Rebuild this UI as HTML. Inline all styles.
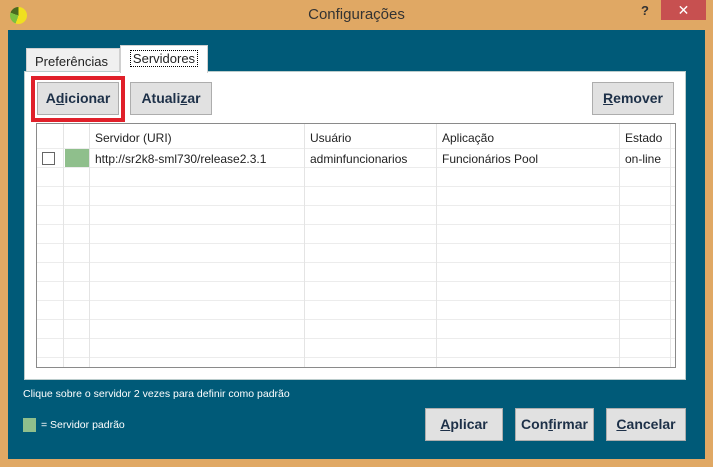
<!DOCTYPE html>
<html><head><meta charset="utf-8"><style>
*{margin:0;padding:0;box-sizing:border-box}
body{width:713px;height:467px;background:#e0a864;position:relative;overflow:hidden;font-family:"Liberation Sans",sans-serif;}
.a{position:absolute}
.btn{position:absolute;background:#e1e1e1;border:1px solid #adadad;font-weight:bold;font-size:14px;color:#1d3048;text-align:center;}
.hl{position:absolute;left:37px;width:638px;height:1px;background:#ececec}
.vl{position:absolute;top:124px;height:243px;width:1px;background:#e4e4e4}
.t{position:absolute;font-size:12px;color:#222}
</style></head><body>
<div class="a" style="left:10px;top:7px;width:17px;height:17px;border-radius:50%;background:conic-gradient(#f0e020 0 200deg,#7cc040 200deg 290deg,#4a6a20 290deg 360deg)"></div>
<div class="a" style="left:0;top:6px;width:713px;text-align:center;font-size:15px;color:#333">Configurações</div>
<div class="a" style="left:641px;top:3px;font-size:13px;font-weight:bold;color:#333">?</div>
<div class="a" style="left:661px;top:0;width:45px;height:20px;background:#c75050;color:#fff;text-align:center;font-size:14px;line-height:20px">✕</div>
<div class="a" style="left:8px;top:30px;width:697px;height:429px;background:#005a78"></div>
<div class="a" style="left:26px;top:48px;width:94px;height:24px;background:#f0f0f0;border:1px solid #d0d0d0;font-size:13px;color:#222;padding:5px 0 0 8px">Preferências</div>
<div class="a" style="left:24px;top:71px;width:662px;height:309px;background:#fff;border:1px solid #bcc;"></div>
<div class="a" style="left:120px;top:45px;width:88px;height:28px;background:#fff;border:1px solid #d0d0d0;border-bottom:none;font-size:13px;color:#222;padding:5px 0 0 0;text-align:center"><span style="border:1px dotted #000;padding:0 2px">Servidores</span></div>
<div class="a" style="left:31px;top:76px;width:94px;height:46px;border:4px solid #e0202a"></div>
<div class="btn" style="left:37px;top:82px;width:82px;height:33px;line-height:31px">A<u>d</u>icionar</div>
<div class="btn" style="left:130px;top:82px;width:82px;height:33px;line-height:31px">Atuali<u>z</u>ar</div>
<div class="btn" style="left:592px;top:82px;width:82px;height:33px;line-height:31px"><u>R</u>emover</div>
<div class="a" style="left:36px;top:123px;width:640px;height:245px;border:1px solid #8a8a8a;background:#fff"></div>
<div class="hl" style="top:148px"></div><div class="hl" style="top:167px"></div><div class="hl" style="top:186px"></div><div class="hl" style="top:205px"></div><div class="hl" style="top:224px"></div><div class="hl" style="top:243px"></div><div class="hl" style="top:262px"></div><div class="hl" style="top:281px"></div><div class="hl" style="top:300px"></div><div class="hl" style="top:319px"></div><div class="hl" style="top:338px"></div><div class="hl" style="top:357px"></div>
<div class="vl" style="left:63px"></div><div class="vl" style="left:89px"></div><div class="vl" style="left:304px"></div><div class="vl" style="left:436px"></div><div class="vl" style="left:619px"></div><div class="vl" style="left:670px"></div>
<div class="a" style="left:42px;top:152px;width:13px;height:13px;border:1px solid #666;background:#fff"></div>
<div class="a" style="left:65px;top:149px;width:24px;height:18px;background:#8fbf8c"></div>
<div class="t" style="left:95px;top:131px">Servidor (URI)</div>
<div class="t" style="left:310px;top:131px">Usuário</div>
<div class="t" style="left:442px;top:131px">Aplicação</div>
<div class="t" style="left:625px;top:131px">Estado</div>
<div class="t" style="left:95px;top:152px">http://sr2k8-sml730/release2.3.1</div>
<div class="t" style="left:310px;top:152px">adminfuncionarios</div>
<div class="t" style="left:442px;top:152px">Funcionários Pool</div>
<div class="t" style="left:625px;top:152px">on-line</div>
<div class="a" style="left:23px;top:388px;font-size:10.5px;color:#fff">Clique sobre o servidor 2 vezes para definir como padrão</div>
<div class="a" style="left:23px;top:418px;width:13px;height:14px;background:#8fbf8c"></div>
<div class="a" style="left:41px;top:419px;font-size:10.5px;color:#fff">= Servidor padrão</div>
<div class="btn" style="left:425px;top:408px;width:78px;height:33px;line-height:31px"><u>A</u>plicar</div>
<div class="btn" style="left:515px;top:408px;width:79px;height:33px;line-height:31px">Con<u>f</u>irmar</div>
<div class="btn" style="left:606px;top:408px;width:80px;height:33px;line-height:31px"><u>C</u>ancelar</div>
</body></html>
